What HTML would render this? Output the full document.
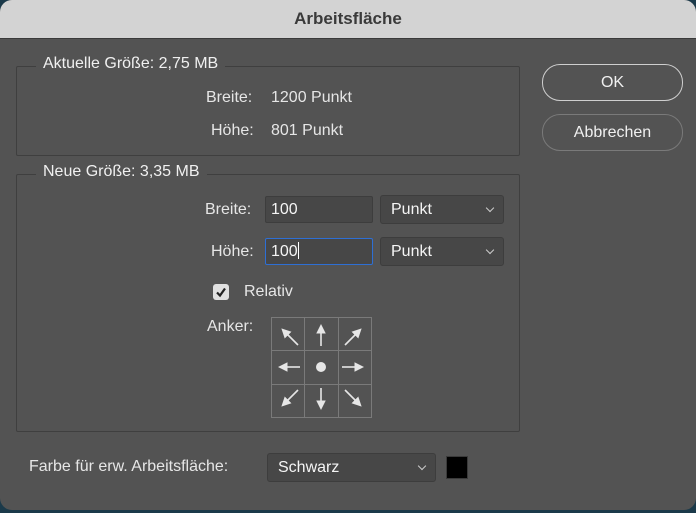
<!DOCTYPE html>
<html><head><style>
body{margin:0;width:696px;height:513px;background:#1b3a4a;overflow:hidden;font-family:"Liberation Sans",sans-serif;color:#e6e6e6;font-size:16px}
.dlg{position:absolute;left:0;top:0;width:696px;height:510px;background:#535353;border-radius:12px;overflow:hidden}
.title{position:absolute;left:0;top:0;width:696px;height:38px;background:#d3d3d3;border-bottom:1px solid #3a3a3a;text-align:center;line-height:38px;font-weight:bold;font-size:17px;color:#3a3a3a}
.box{position:absolute;border:1px solid #3f3f3f;border-radius:2px}
.leg{position:absolute;background:#535353;padding:0 7px;font-size:16px;color:#f0f0f0}
.t{position:absolute;white-space:nowrap}
.btn{position:absolute;left:542px;width:139px;height:35px;border-radius:18px;border:1px solid #cfcfcf;text-align:center;line-height:35px;font-size:16px;color:#f0f0f0}
.inp{position:absolute;background:#474747;border:1px solid #3d3d3d;border-radius:2px;box-sizing:border-box;padding-left:5px;line-height:25px;font-size:16px;color:#f5f5f5}
.sel{position:absolute;background:#474747;border:1px solid #3d3d3d;border-radius:3px;box-sizing:border-box;padding-left:10px;line-height:27px;font-size:16px;color:#f5f5f5}
.sel:after{content:"";position:absolute;right:10px;top:9px;width:5px;height:5px;border-right:1.3px solid #ccc;border-bottom:1.3px solid #ccc;transform:rotate(45deg)}
</style></head><body>
<div class="dlg">
<div class="title">Arbeitsfläche</div>
<div class="box" style="left:16px;top:66px;width:502px;height:88px"></div>
<div class="leg" style="left:36px;top:55px">Aktuelle Größe: 2,75 MB</div>
<div class="t" style="left:206px;top:89px">Breite:</div>
<div class="t" style="left:271px;top:89px">1200 Punkt</div>
<div class="t" style="left:211px;top:122px">Höhe:</div>
<div class="t" style="left:271px;top:122px">801 Punkt</div>
<div class="box" style="left:16px;top:174px;width:502px;height:256px"></div>
<div class="leg" style="left:36px;top:163px">Neue Größe: 3,35 MB</div>
<div class="t" style="left:205px;top:201px">Breite:</div>
<div class="inp" style="left:265px;top:196px;width:108px;height:27px">100</div>
<div class="sel" style="left:380px;top:195px;width:124px;height:29px">Punkt</div>
<div class="t" style="left:211px;top:243px">Höhe:</div>
<div class="inp" style="left:265px;top:238px;width:108px;height:27px;border:1px solid #2e6fd4">100<span style="display:inline-block;width:1px;height:17px;background:#fff;vertical-align:-3px"></span></div>
<div class="sel" style="left:380px;top:237px;width:124px;height:29px">Punkt</div>
<div style="position:absolute;left:213px;top:284px;width:16px;height:16px;background:#e0e0e0;border-radius:3px"><svg width="16" height="16"><path d="M4 8.5L7 11.5L12 4.5" stroke="#222" stroke-width="2.2" fill="none"/></svg></div>
<div class="t" style="left:244px;top:283px">Relativ</div>
<div class="t" style="left:207px;top:318px">Anker:</div>
<svg style="position:absolute;left:271px;top:317px" width="101" height="101">
<g stroke="#7a7a7a" stroke-width="1" fill="none"><rect x="0.5" y="0.5" width="100" height="100"/><line x1="33.5" y1="0" x2="33.5" y2="101"/><line x1="67.5" y1="0" x2="67.5" y2="101"/><line x1="0" y1="33.5" x2="101" y2="33.5"/><line x1="0" y1="67.5" x2="101" y2="67.5"/></g>
<defs><marker id="a" markerWidth="6" markerHeight="6" refX="1" refY="3" orient="auto"><path d="M0 0L6 3L0 6Z" fill="#e6e6e6"/></marker></defs>
<g stroke="#e6e6e6" stroke-width="1.6" marker-end="url(#a)">
<line x1="27" y1="28" x2="16" y2="17"/><line x1="50" y1="29" x2="50" y2="15"/><line x1="74" y1="28" x2="85" y2="17"/>
<line x1="29" y1="50" x2="15" y2="50"/><line x1="71" y1="50" x2="85" y2="50"/>
<line x1="27" y1="73" x2="16" y2="84"/><line x1="50" y1="71" x2="50" y2="85"/><line x1="74" y1="73" x2="85" y2="84"/></g>
<circle cx="50" cy="50" r="5" fill="#e6e6e6"/>
</svg>
<div class="t" style="left:29px;top:458px">Farbe für erw. Arbeitsfläche:</div>
<div class="sel" style="left:267px;top:453px;width:169px;height:29px">Schwarz</div>
<div style="position:absolute;left:446px;top:456px;width:22px;height:23px;background:#000;border:1px solid #3a3a3a;box-sizing:border-box"></div>
<div class="btn" style="top:64px">OK</div>
<div class="btn" style="top:114px;border-color:#7a7a7a">Abbrechen</div>
</div>
</body></html>
